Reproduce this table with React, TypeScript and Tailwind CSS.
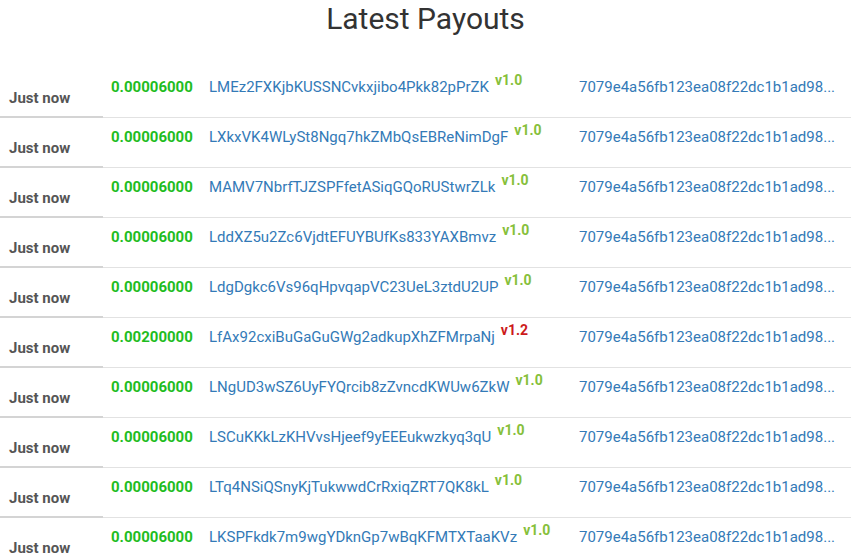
import React from 'react';

type Payout = {
  amount: string;
  address: string;
  version: string;
};

const HASH = '7079e4a56fb123ea08f22dc1b1ad98...';

const payouts: Payout[] = [
  { amount: '0.00006000', address: 'LMEz2FXKjbKUSSNCvkxjibo4Pkk82pPrZK', version: 'v1.0' },
  { amount: '0.00006000', address: 'LXkxVK4WLySt8Ngq7hkZMbQsEBReNimDgF', version: 'v1.0' },
  { amount: '0.00006000', address: 'MAMV7NbrfTJZSPFfetASiqGQoRUStwrZLk', version: 'v1.0' },
  { amount: '0.00006000', address: 'LddXZ5u2Zc6VjdtEFUYBUfKs833YAXBmvz', version: 'v1.0' },
  { amount: '0.00006000', address: 'LdgDgkc6Vs96qHpvqapVC23UeL3ztdU2UP', version: 'v1.0' },
  { amount: '0.00200000', address: 'LfAx92cxiBuGaGuGWg2adkupXhZFMrpaNj', version: 'v1.2' },
  { amount: '0.00006000', address: 'LNgUD3wSZ6UyFYQrcib8zZvncdKWUw6ZkW', version: 'v1.0' },
  { amount: '0.00006000', address: 'LSCuKKkLzKHVvsHjeef9yEEEukwzkyq3qU', version: 'v1.0' },
  { amount: '0.00006000', address: 'LTq4NSiQSnyKjTukwwdCrRxiqZRT7QK8kL', version: 'v1.0' },
  { amount: '0.00006000', address: 'LKSPFkdk7m9wgYDknGp7wBqKFMTXTaaKVz', version: 'v1.0' },
];

function PayoutRow({ payout }: { payout: Payout }) {
  const outdated = payout.version !== 'v1.0';
  return (
    <div className="grid grid-cols-[103px_106px_370px_1fr] h-[50px] text-[15px] leading-[20px]">
      {/* time cell has its own heavier rule */}
      <div className="pl-[9px] pt-[20px] font-bold text-[#555] border-b-2 border-[#d4d4d4]">
        Just now
      </div>
      <div className="pl-[8px] pt-[9px] font-bold text-[#1fbd1f] border-b border-[#e2e2e2]">
        {payout.amount}
      </div>
      <div className="pt-[9px] text-[#337ab7] border-b border-[#e2e2e2] whitespace-nowrap">
        {payout.address}
        <sup
          className={`ml-[6px] -top-[7px] text-[14px] font-bold ${outdated ? 'text-[#cc1a1a]' : 'text-[#86c03a]'}`}
        >
          {payout.version}
        </sup>
      </div>
      <div className="pt-[9px] text-[#337ab7] border-b border-[#e2e2e2] whitespace-nowrap overflow-hidden">
        {HASH}
      </div>
    </div>
  );
}

export default function App() {
  return (
    <div className="w-[851px] h-[556px] overflow-hidden bg-white font-['Roboto',sans-serif]">
      <div className="h-[68px] pt-[2px]">
        <h1 className="text-center text-[30px] leading-[33px] font-normal text-[#333]">
          Latest Payouts
        </h1>
      </div>
      <div className="flex flex-col">
        {payouts.map((p, i) => (
          <PayoutRow key={i} payout={p} />
        ))}
      </div>
    </div>
  );
}
